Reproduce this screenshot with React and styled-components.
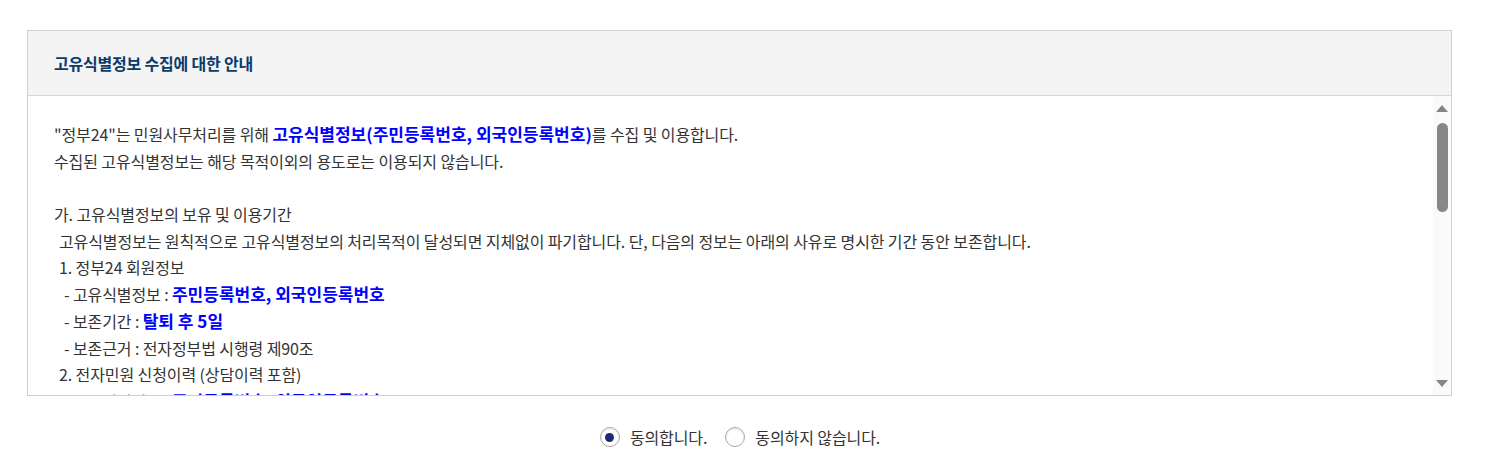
import React, { useState, useRef, useLayoutEffect, useCallback } from "react";
import styled, { createGlobalStyle } from "styled-components";

const Global = createGlobalStyle`
  html, body { margin: 0; padding: 0; background: #fff; }
  body { font-family: "Noto Sans CJK KR", "Noto Sans", sans-serif; color: #333; }
`;

const Page = styled.div`
  padding: 30px 50px 0 27px;
`;

const Box = styled.section`
  border: 1px solid #cfcfcf;
  background: #fff;
`;

const Header = styled.h2`
  margin: 0;
  height: 64px;
  display: flex;
  align-items: center;
  padding: 0 26px;
  background: #f4f4f4;
  border-bottom: 1px solid #d6d6d6;
  font-size: 16px;
  font-weight: 700;
  letter-spacing: -0.2px;
  color: #0d3a6c;
`;

const Body = styled.div`
  display: flex;
  height: 299px;
  padding-right: 1px;
`;

const Scroll = styled.div`
  flex: 1;
  min-width: 0;
  overflow-y: auto;
  padding: 25px 26px 20px;
  box-sizing: border-box;
  scrollbar-width: none;
  &::-webkit-scrollbar { display: none; }
`;

const Bar = styled.div`
  width: 17px;
  flex: none;
  display: flex;
  flex-direction: column;
  background: #fafafa;
`;

const Arrow = styled.button`
  height: 24px;
  width: 17px;
  flex: none;
  border: 0;
  padding: 0;
  background: transparent;
  display: flex;
  align-items: center;
  justify-content: center;
  cursor: pointer;
  &::before {
    content: "";
    display: block;
    width: 0;
    height: 0;
    border-left: 6px solid transparent;
    border-right: 6px solid transparent;
    ${(p) =>
      p.$down
        ? "border-top: 7px solid #858585;"
        : "border-bottom: 7px solid #858585;"}
    margin-left: 1px;
  }
`;

const Track = styled.div`
  flex: 1;
  padding: 3px 0;
  display: flex;
  flex-direction: column;
  align-items: center;
  box-sizing: border-box;
`;

const Thumb = styled.div`
  width: 11px;
  margin-left: 1px;
  flex: none;
  border-radius: 6px;
  background: #878787;
`;

const Line = styled.p`
  margin: 0;
  height: 26.7px;
  line-height: 26.7px;
  font-size: 16px;
  letter-spacing: -0.1px;
  color: #333;
  padding-left: ${(p) => (p.$indent || 0) * 5}px;
  white-space: nowrap;
`;

const Em = styled.strong`
  color: #0000ff;
  font-weight: 700;
  font-size: 17px;
  line-height: 1;
  letter-spacing: 0;
`;

const RadioRow = styled.div`
  display: flex;
  justify-content: center;
  gap: 18px;
  margin-top: 31px;
  margin-left: 1px;
`;

const RadioLabel = styled.label`
  display: flex;
  align-items: center;
  gap: 10px;
  cursor: pointer;
  font-size: 16px;
  letter-spacing: -0.1px;
  color: #333;
  line-height: 20px;
`;

const Circle = styled.span`
  width: 20px;
  height: 20px;
  box-sizing: border-box;
  border-radius: 50%;
  border: 1px solid #a9a9a9;
  background: #fff;
  box-shadow: inset 0 1px 2px rgba(0, 0, 0, 0.12);
  display: flex;
  align-items: center;
  justify-content: center;
  &::after {
    content: "";
    width: 9px;
    height: 9px;
    border-radius: 50%;
    background: ${(p) => (p.$checked ? "#1c2a78" : "transparent")};
  }
`;

const HiddenInput = styled.input`
  position: absolute;
  opacity: 0;
  width: 0;
  height: 0;
`;

const lines = [
  { i: 0, c: <>"정부24"는 민원사무처리를 위해 <Em>고유식별정보(주민등록번호, 외국인등록번호)</Em>를 수집 및 이용합니다.</> },
  { i: 0, c: <>수집된 고유식별정보는 해당 목적이외의 용도로는 이용되지 않습니다.</> },
  { i: 0, c: null },
  { i: 0, c: <>가. 고유식별정보의 보유 및 이용기간</> },
  { i: 1, c: <>고유식별정보는 원칙적으로 고유식별정보의 처리목적이 달성되면 지체없이 파기합니다. 단, 다음의 정보는 아래의 사유로 명시한 기간 동안 보존합니다.</> },
  { i: 1, c: <>1. 정부24 회원정보</> },
  { i: 2, c: <>- 고유식별정보 : <Em>주민등록번호, 외국인등록번호</Em></> },
  { i: 2, c: <>- 보존기간 : <Em>탈퇴 후 5일</Em></> },
  { i: 2, c: <>- 보존근거 : 전자정부법 시행령 제90조</> },
  { i: 1, c: <>2. 전자민원 신청이력 (상담이력 포함)</> },
  { i: 2, c: <>- 고유식별정보 : <Em>주민등록번호, 외국인등록번호</Em></> },
  { i: 2, c: <>- 보존기간 : <Em>10년</Em></> },
  { i: 2, c: <>- 보존근거 : 민원 처리에 관한 법률 시행령 제10조</> },
  { i: 1, c: <>3. 전자민원 처리결과 (발급문서 등)</> },
  { i: 2, c: <>- 고유식별정보 : <Em>주민등록번호, 외국인등록번호</Em></> },
  { i: 2, c: <>- 보존기간 : <Em>5년</Em></> },
  { i: 2, c: <>- 보존근거 : 공공기록물 관리에 관한 법률 시행령 제26조</> },
  { i: 0, c: null },
  { i: 0, c: <>나. 고유식별정보의 수집 및 이용 근거</> },
  { i: 1, c: <>민원 처리에 관한 법률 시행령 제58조, 전자정부법 시행령 제90조</> },
  { i: 0, c: null },
  { i: 0, c: <>다. 고유식별정보의 수집 및 이용 목적</> },
  { i: 1, c: <>회원가입 시 본인확인, 전자민원 신청 및 처리, 민원 처리결과 통지</> },
  { i: 0, c: null },
  { i: 0, c: <>라. 동의를 거부할 권리 및 동의를 거부할 경우의 불이익</> },
  { i: 1, c: <>귀하는 고유식별정보 수집 및 이용에 대한 동의를 거부할 권리가 있습니다.</> },
  { i: 1, c: <>다만, 동의를 거부하실 경우 정부24 회원가입 및 전자민원 서비스 이용이 제한됩니다.</> },
  { i: 0, c: null },
  { i: 0, c: <>※ 고유식별정보의 처리에 관한 자세한 사항은 개인정보처리방침을 참고하시기 바랍니다.</> },
];

const TRACK_INNER = 245;

export default function App() {
  const [agree, setAgree] = useState(true);
  const ref = useRef(null);
  const [thumb, setThumb] = useState({ h: 92, top: 0 });

  const measure = useCallback(() => {
    const el = ref.current;
    if (!el) return;
    const ratio = el.clientHeight / el.scrollHeight;
    const h = Math.max(20, Math.round(TRACK_INNER * ratio));
    const max = el.scrollHeight - el.clientHeight;
    const top = max > 0 ? Math.round((el.scrollTop / max) * (TRACK_INNER - h)) : 0;
    setThumb({ h, top });
  }, []);

  useLayoutEffect(() => {
    measure();
  }, [measure]);

  const step = (d) => {
    if (ref.current) ref.current.scrollTop += d;
  };

  return (
    <>
      <Global />
      <Page>
        <Box>
          <Header>고유식별정보 수집에 대한 안내</Header>
          <Body>
            <Scroll ref={ref} onScroll={measure}>
              {lines.map((l, k) => (
                <Line key={k} $indent={l.i}>{l.c}</Line>
              ))}
            </Scroll>
            <Bar>
              <Arrow type="button" aria-label="위로" onClick={() => step(-27)} />
              <Track>
                <Thumb style={{ height: thumb.h, marginTop: thumb.top }} />
              </Track>
              <Arrow type="button" aria-label="아래로" $down onClick={() => step(27)} />
            </Bar>
          </Body>
        </Box>
        <RadioRow>
          <RadioLabel>
            <HiddenInput type="radio" name="agree" checked={agree} onChange={() => setAgree(true)} />
            <Circle $checked={agree} />
            동의합니다.
          </RadioLabel>
          <RadioLabel>
            <HiddenInput type="radio" name="agree" checked={!agree} onChange={() => setAgree(false)} />
            <Circle $checked={!agree} />
            동의하지 않습니다.
          </RadioLabel>
        </RadioRow>
      </Page>
    </>
  );
}
